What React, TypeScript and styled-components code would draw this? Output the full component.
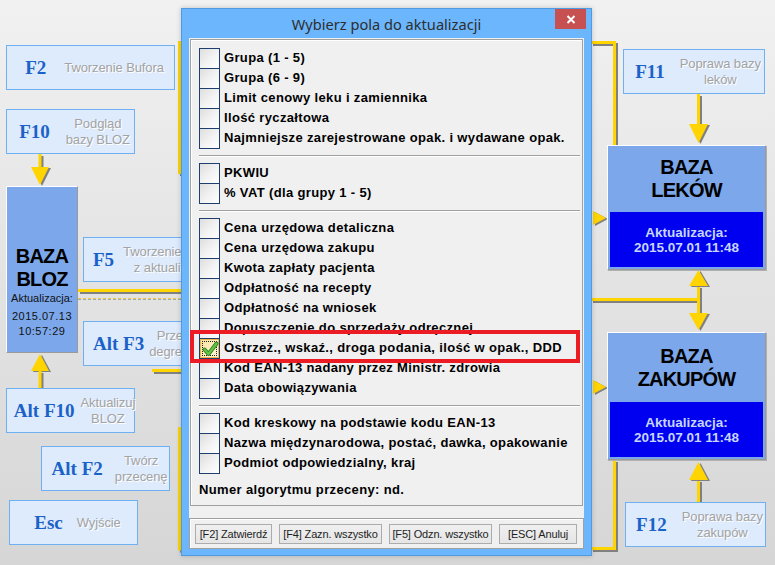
import styled, { createGlobalStyle } from 'styled-components';

const GlobalStyle = createGlobalStyle`
  html, body {
    margin: 0;
    padding: 0;
  }
  body {
    width: 775px;
    height: 565px;
    overflow: hidden;
    font-family: 'Liberation Sans', Arial, sans-serif;
  }
`;

const YELLOW = '#ffd400';
const SHADOW = '#808080';

const Canvas = styled.div`
  position: relative;
  width: 775px;
  height: 565px;
  overflow: hidden;
  background: linear-gradient(180deg, #f1f1f1 0%, #e3e3e3 50%, #d6d6d6 100%);
`;

const Wires = styled.svg`
  position: absolute;
  left: 0;
  top: 0;
`;

const KeyBox = styled.div<{ $x: number; $y: number; $w: number; $gap?: number; $start?: boolean }>`
  position: absolute;
  left: ${({ $x }) => $x}px;
  top: ${({ $y }) => $y}px;
  width: ${({ $w }) => $w}px;
  height: 45px;
  box-sizing: border-box;
  display: flex;
  align-items: center;
  justify-content: ${({ $start }) => ($start ? 'flex-start' : 'center')};
  gap: ${({ $gap }) => $gap ?? 14}px;
  padding-left: ${({ $start }) => ($start ? 9 : 8)}px;
  background: #deebfd;
  border: 1px solid #6eb0f2;
`;

const Key = styled.span`
  font-family: 'Liberation Serif', 'Times New Roman', serif;
  font-weight: 700;
  font-size: 19px;
  color: #1a62c8;
  white-space: nowrap;
`;

const Desc = styled.span`
  font-family: 'Liberation Sans', Arial, sans-serif;
  font-size: 13px;
  letter-spacing: -0.1px;
  line-height: 16px;
  color: #a3a3a3;
  text-align: center;
  text-shadow: 1px 1px 0 #ffffff;
  white-space: nowrap;
`;

const BlozBox = styled.div`
  position: absolute;
  left: 6px;
  top: 186px;
  width: 72px;
  height: 167px;
  box-sizing: border-box;
  padding-top: 58px;
  display: flex;
  flex-direction: column;
  align-items: center;
  background: #7ca8eb;
  border-top: 1px solid #ffffff;
  border-left: 1px solid #ffffff;
  border-right: 1px solid #9a9a9a;
  border-bottom: 1px solid #9a9a9a;
`;

const BigName = styled.div`
  font-weight: 700;
  font-size: 20px;
  letter-spacing: -0.8px;
  line-height: 23px;
  color: #000;
  text-align: center;
`;

const Small = styled.div<{ $gapTop?: number; $wide?: boolean }>`
  font-size: 11px;
  line-height: 15px;
  letter-spacing: ${({ $wide }) => ($wide ? 0.5 : 0)}px;
  color: #111;
  text-align: center;
  margin-top: ${({ $gapTop }) => $gapTop ?? 0}px;
`;

const DbBox = styled.div<{ $y: number; $h: number }>`
  position: absolute;
  left: 607px;
  top: ${({ $y }) => $y}px;
  width: 159px;
  height: ${({ $h }) => $h}px;
  box-sizing: border-box;
  display: flex;
  flex-direction: column;
  padding: 0 2px 2px 2px;
  background: #7ca8eb;
  border-top: 1px solid #ffffff;
  border-left: 1px solid #ffffff;
  border-right: 1px solid #9a9a9a;
  border-bottom: 1px solid #9a9a9a;
  box-shadow: 1px 1px 0 #b0b0b0;
`;

const DbHead = styled.div`
  flex: 1;
  display: flex;
  flex-direction: column;
  justify-content: center;
  align-items: center;
`;

const DbStamp = styled.div`
  height: 55px;
  display: flex;
  flex-direction: column;
  justify-content: center;
  align-items: center;
  background: #0000f0;
  color: #c6d6ff;
  font-weight: 700;
  font-size: 13.5px;
  line-height: 15px;
`;

const Dialog = styled.div`
  position: absolute;
  left: 181px;
  top: 8px;
  width: 411px;
  height: 548px;
  box-sizing: border-box;
  display: flex;
  flex-direction: column;
  padding: 0 7px 6px 7px;
  background: #6bb6fc;
  border: 1px solid #4f9ae0;
  box-shadow: 0 0 5px rgba(0, 0, 0, 0.2);
`;

const TitleBar = styled.div`
  position: relative;
  height: 29px;
  display: flex;
  align-items: center;
  justify-content: center;
  font-family: 'Noto Sans', 'Open Sans', sans-serif;
  font-size: 14.6px;
  color: #2e2e2e;
`;

const CloseButton = styled.div`
  position: absolute;
  right: -2px;
  top: 0;
  width: 31px;
  height: 20px;
  display: flex;
  align-items: center;
  justify-content: center;
  background: #c75050;
`;

const Body = styled.div`
  flex: 1;
  display: flex;
  flex-direction: column;
  gap: 12px;
  padding-top: 1px;
  background: #f0f0f0;
`;

const ListPanel = styled.div`
  height: 467px;
  box-sizing: border-box;
  margin: 0 1px;
  padding: 8px 2px 0 8px;
  border: 1px solid #a0a0a0;
  box-shadow: inset 1px 1px 0 #ffffff;
`;

const Row = styled.div`
  display: flex;
  height: 20px;
`;

const Box = styled.span`
  position: relative;
  flex: none;
  width: 21px;
  height: 21px;
  box-sizing: border-box;
  border: 1px solid #1e3f6e;
  background: linear-gradient(135deg, #dedede 0%, #f3f3f3 55%, #ffffff 100%);
`;

const CheckedFill = styled.span`
  position: absolute;
  inset: 0;
  border: 1px solid #f2b446;
  background: linear-gradient(135deg, #fbe3a0 0%, #fff6d8 100%);
  outline: 1px dotted #222;
  outline-offset: -3px;
`;

const Label = styled.span`
  margin-left: 4px;
  font-weight: 700;
  font-size: 13px;
  line-height: 20px;
  letter-spacing: 0.35px;
  color: #000;
  white-space: nowrap;
`;

const Separator = styled.div`
  margin: 7px 0 6px;
  border-top: 1px solid #a0a0a0;
  border-bottom: 1px solid #ffffff;
`;

const Footnote = styled.div`
  margin-top: 9px;
  font-weight: 700;
  font-size: 13px;
  line-height: 16px;
  letter-spacing: 0.35px;
  color: #000;
`;

const ButtonBar = styled.div`
  height: 31px;
  box-sizing: border-box;
  display: flex;
  align-items: center;
  gap: 7px;
  padding-left: 5px;
  border: 1px solid #a0a0a0;
  box-shadow: inset 1px 1px 0 #ffffff;
`;

const Button = styled.div<{ $w: number }>`
  width: ${({ $w }) => $w}px;
  height: 20px;
  box-sizing: border-box;
  display: flex;
  align-items: center;
  justify-content: center;
  border: 1px solid #acacac;
  background: linear-gradient(180deg, #f0f0f0 0%, #e5e5e5 100%);
  font-size: 11px;
  letter-spacing: -0.15px;
  color: #1e1e1e;
  white-space: nowrap;
`;

const Highlight = styled.div`
  position: absolute;
  left: 190px;
  top: 330px;
  width: 390px;
  height: 33px;
  box-sizing: border-box;
  border: 4px solid #ec1c24;
`;

const Link = ({ d, dashed }: { d: string; dashed?: boolean }) =>
  dashed ? (
    <>
      <path d={d} transform="translate(0 1)" stroke="#a8a8a8" strokeWidth={1} strokeDasharray="3 2" fill="none" />
      <path d={d} stroke="#e9c94a" strokeWidth={1} strokeDasharray="3 2" fill="none" />
    </>
  ) : (
    <>
      <path d={d} transform="translate(2 2)" stroke={SHADOW} strokeWidth={3} fill="none" />
      <path d={d} stroke={YELLOW} strokeWidth={3} fill="none" />
    </>
  );

const Head = ({ points }: { points: string }) => (
  <>
    <polygon points={points} transform="translate(2 1)" fill={SHADOW} />
    <polygon points={points} fill={YELLOW} />
  </>
);

const CheckMark = () => (
  <svg width="19" height="19" viewBox="0 0 19 19" style={{ position: 'absolute', left: 0, top: 0 }}>
    <path d="M3.5 9.5 L7.5 14 L15.5 3.5" stroke="#2f7d1f" strokeWidth={4} strokeLinecap="round" strokeLinejoin="round" fill="none" />
    <path d="M3.5 9.5 L7.5 14 L15.5 3.5" stroke="#5fc447" strokeWidth={2.2} strokeLinecap="round" strokeLinejoin="round" fill="none" />
  </svg>
);

const groups: string[][] = [
  [
    'Grupa (1 - 5)',
    'Grupa (6 - 9)',
    'Limit cenowy leku i zamiennika',
    'Ilość ryczałtowa',
    'Najmniejsze zarejestrowane opak. i wydawane opak.',
  ],
  ['PKWIU', '% VAT (dla grupy 1 - 5)'],
  [
    'Cena urzędowa detaliczna',
    'Cena urzędowa zakupu',
    'Kwota zapłaty pacjenta',
    'Odpłatność na recepty',
    'Odpłatność na wniosek',
    'Dopuszczenie do sprzedaży odręcznej',
    'Ostrzeż., wskaź., droga podania, ilość w opak., DDD',
    'Kod EAN-13 nadany przez Ministr. zdrowia',
    'Data obowiązywania',
  ],
  [
    'Kod kreskowy na podstawie kodu EAN-13',
    'Nazwa międzynarodowa, postać, dawka, opakowanie',
    'Podmiot odpowiedzialny, kraj',
  ],
];

const checked = 'Ostrzeż., wskaź., droga podania, ilość w opak., DDD';

const buttons = [
  { label: '[F2] Zatwierdź', w: 77 },
  { label: '[F4] Zazn. wszystko', w: 103 },
  { label: '[F5] Odzn. wszystko', w: 103 },
  { label: '[ESC] Anuluj', w: 78 },
];

export default function App() {
  return (
    <>
      <GlobalStyle />
      <Canvas>
        <Wires width="775" height="565" viewBox="0 0 775 565">
          <Link d="M182 42.5 H179.5 V172.5 H182" />
          <Link d="M182 428.5 H179.5 V549 H182" />
          <Link d="M40 154 V168" />
          <Head points="31,167 49,167 40,185" />
          <Head points="31,371 49,371 40,354" />
          <Link d="M40 371 V388" />
          <Link d="M78 290.5 H182" />
          <Link d="M78 298.5 H182" dashed />
          <Link d="M152 370.5 H182" />

          <Link d="M591 42.5 H614.5 V145" />
          <Head points="593,211 593,225 606,218" />
          <Link d="M698.5 94 V124" />
          <Head points="689,124 708,124 698.5,143" />
          <Link d="M591 299.5 H698.5" />
          <Link d="M698.5 286 V313" />
          <Head points="689,286 708,286 698.5,270" />
          <Head points="689,313 708,313 698.5,330" />
          <Head points="593,380 593,394 606,387" />
          <Link d="M698.5 480 V502" />
          <Head points="689,480 708,480 698.5,462" />
          <Link d="M614.5 460 V548.5 H591" />
        </Wires>

        <KeyBox $x={6} $y={45} $w={169} $gap={18}>
          <Key>F2</Key>
          <Desc>Tworzenie Bufora</Desc>
        </KeyBox>
        <KeyBox $x={6} $y={109} $w={129} $gap={16}>
          <Key>F10</Key>
          <Desc>
            Podgląd
            <br />
            bazy BLOZ
          </Desc>
        </KeyBox>
        <KeyBox $x={83} $y={237} $w={150} $gap={9} $start>
          <Key>F5</Key>
          <Desc>
            Tworzenie bufora
            <br />
            z aktualizacją
          </Desc>
        </KeyBox>
        <KeyBox $x={83} $y={321} $w={150} $gap={5} $start>
          <Key>Alt F3</Key>
          <Desc>
            Przecena
            <br />
            degresywna
          </Desc>
        </KeyBox>
        <KeyBox $x={6} $y={388} $w={129} $gap={6}>
          <Key>Alt F10</Key>
          <Desc>
            Aktualizuj
            <br />
            BLOZ
          </Desc>
        </KeyBox>
        <KeyBox $x={41} $y={446} $w={129} $gap={12}>
          <Key>Alt F2</Key>
          <Desc>
            Twórz
            <br />
            przecenę
          </Desc>
        </KeyBox>
        <KeyBox $x={9} $y={500} $w={129} $gap={14}>
          <Key>Esc</Key>
          <Desc>Wyjście</Desc>
        </KeyBox>
        <KeyBox $x={623} $y={49} $w={142} $gap={15}>
          <Key>F11</Key>
          <Desc>
            Poprawa bazy
            <br />
            leków
          </Desc>
        </KeyBox>
        <KeyBox $x={625} $y={502} $w={141} $gap={15}>
          <Key>F12</Key>
          <Desc>
            Poprawa bazy
            <br />
            zakupów
          </Desc>
        </KeyBox>

        <BlozBox>
          <BigName>BAZA</BigName>
          <BigName>BLOZ</BigName>
          <Small>Aktualizacja:</Small>
          <Small $gapTop={3} $wide>2015.07.13</Small>
          <Small $wide>10:57:29</Small>
        </BlozBox>

        <DbBox $y={145} $h={125}>
          <DbHead>
            <BigName>BAZA</BigName>
            <BigName>LEKÓW</BigName>
          </DbHead>
          <DbStamp>
            <span>Aktualizacja:</span>
            <span>2015.07.01 11:48</span>
          </DbStamp>
        </DbBox>
        <DbBox $y={332} $h={128}>
          <DbHead>
            <BigName>BAZA</BigName>
            <BigName>ZAKUPÓW</BigName>
          </DbHead>
          <DbStamp>
            <span>Aktualizacja:</span>
            <span>2015.07.01 11:48</span>
          </DbStamp>
        </DbBox>

        <Dialog>
          <TitleBar>
            Wybierz pola do aktualizacji
            <CloseButton>
              <svg width="10" height="9" viewBox="0 0 10 9">
                <path d="M1.5 1 L8.5 8 M8.5 1 L1.5 8" stroke="#ffffff" strokeWidth={2} />
              </svg>
            </CloseButton>
          </TitleBar>
          <Body>
            <ListPanel>
              {groups.map((items, gi) => (
                <div key={gi}>
                  {gi > 0 && <Separator />}
                  {items.map((text) => (
                    <Row key={text}>
                      <Box>
                        {text === checked && (
                          <CheckedFill>
                            <CheckMark />
                          </CheckedFill>
                        )}
                      </Box>
                      <Label>{text}</Label>
                    </Row>
                  ))}
                </div>
              ))}
              <Footnote>Numer algorytmu przeceny: nd.</Footnote>
            </ListPanel>
            <ButtonBar>
              {buttons.map((b) => (
                <Button key={b.label} $w={b.w}>
                  {b.label}
                </Button>
              ))}
            </ButtonBar>
          </Body>
        </Dialog>

        <Highlight />
      </Canvas>
    </>
  );
}
